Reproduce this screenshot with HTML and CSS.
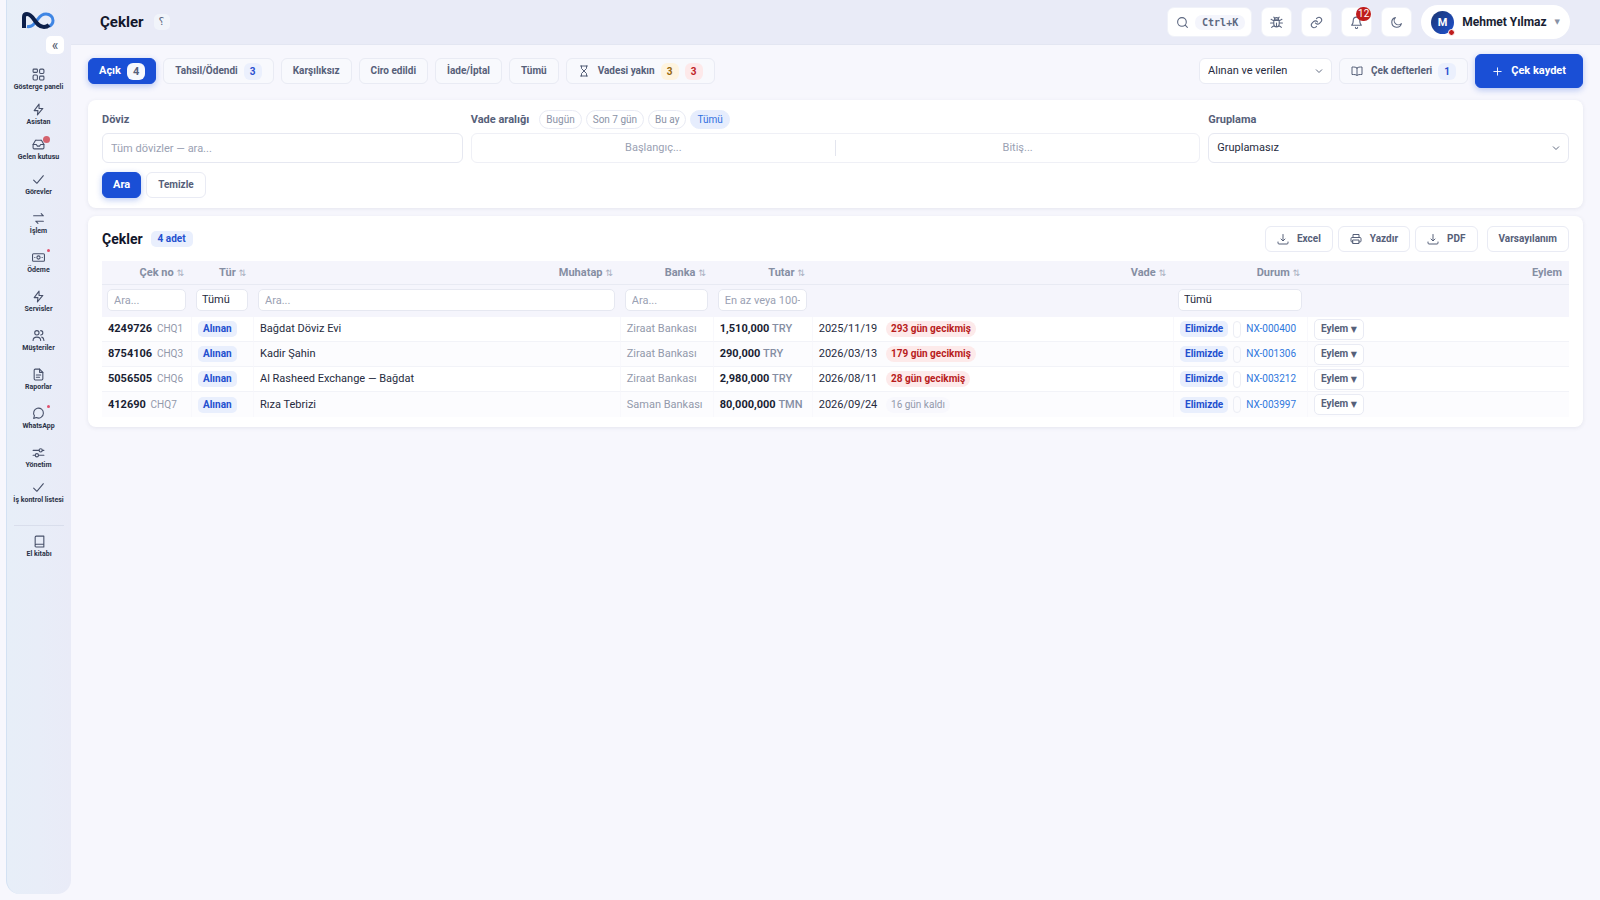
FILE: index.html
```html
<!DOCTYPE html>
<html lang="tr">
<head>
    <meta charset="UTF-8">
    <meta name="viewport" content="width=device-width, initial-scale=1.0">
    <title>Çekler</title>
    <link rel="stylesheet" href="styles.css">
</head>
<body>
    <!-- Icon sprite -->
    <svg class="sprite" aria-hidden="true">
        <symbol id="i-grid" viewBox="0 0 24 24"><rect x="2" y="2" width="8" height="6" rx="1.5"/><rect x="14" y="2" width="8" height="8" rx="2"/><rect x="2" y="13" width="8" height="9" rx="2"/><rect x="14" y="15" width="8" height="7" rx="1.5"/></symbol>
        <symbol id="i-bolt" viewBox="0 0 24 24"><path d="M13 2L4 14h7l-1 8 10-12h-7z"/></symbol>
        <symbol id="i-inbox" viewBox="0 0 24 24"><path d="M22 12h-6l-2 3h-4l-2-3H2"/><path d="M6 5L2 12v6a2 2 0 0 0 2 2h16a2 2 0 0 0 2-2v-6l-4-7a2 2 0 0 0-2-1H8a2 2 0 0 0-2 1z"/></symbol>
        <symbol id="i-check" viewBox="0 0 24 24"><path d="M3 13l6 6L21 5"/></symbol>
        <symbol id="i-swap" viewBox="0 0 24 24"><path d="M3 7h18M17 3l4 4M21 17H7M11 21l-4-4"/></symbol>
        <symbol id="i-cash" viewBox="0 0 24 24"><rect x="1" y="5" width="22" height="14" rx="2"/><circle cx="12" cy="12" r="3"/><path d="M5 12h.5M18.500 12h.5"/></symbol>
        <symbol id="i-users" viewBox="0 0 24 24"><circle cx="9" cy="7" r="4"/><path d="M2 21c0-4 3-6 7-6s7 2 7 6M16 3a4 4 0 0 1 0 8M18 15c3 1 4 3 4 6"/></symbol>
        <symbol id="i-file" viewBox="0 0 24 24"><path d="M14 2H6a2 2 0 0 0-2 2v16a2 2 0 0 0 2 2h12a2 2 0 0 0 2-2V8z"/><path d="M14 2v6h6M8 13h8M8 17h6"/></symbol>
        <symbol id="i-chat" viewBox="0 0 24 24"><path d="M21 11.500a9 9 0 0 1-13 8L3 21l1.500-5A9 9 0 1 1 21 11.500z"/></symbol>
        <symbol id="i-sliders" viewBox="0 0 24 24"><path d="M2 8h11M19 8h3M2 17h4M12 17h10"/><circle cx="16" cy="8" r="3"/><circle cx="9" cy="17" r="3"/></symbol>
        <symbol id="i-book" viewBox="0 0 24 24"><path d="M4 19V4a2 2 0 0 1 2-2h14v20H6a2 2 0 0 1-2-3 3 3 0 0 1 2-2h14"/></symbol>
        <symbol id="i-search" viewBox="0 0 24 24"><circle cx="11" cy="11" r="8"/><path d="M21 21l-4-4"/></symbol>
        <symbol id="i-bug" viewBox="0 0 24 24"><path d="M8 7a4 4 0 0 1 8 0zM7 8h10v7a5 5 0 0 1-10 0zM12 13v7M7 13H1M23 13h-6M7 9L2 6M17 9l5-3M8 17l-5 4M16 17l5 4M9 4L7 2M15 4l2-2"/></symbol>
        <symbol id="i-link" viewBox="0 0 24 24"><path d="M10 13a5 5 0 0 0 7.500.5l3-3a5 5 0 0 0-7-7L12 5"/><path d="M14 11a5 5 0 0 0-7.500-.5l-3 3a5 5 0 0 0 7 7L12 19"/></symbol>
        <symbol id="i-bell" viewBox="0 0 24 24"><path d="M18 8A6 6 0 0 0 6 8c0 7-3 9-3 9h18s-3-2-3-9M14 21a2 2 0 0 1-4 0"/></symbol>
        <symbol id="i-moon" viewBox="0 0 24 24"><path d="M21 14A9 9 0 1 1 10 3a7 7 0 0 0 11 11z"/></symbol>
        <symbol id="i-hourglass" viewBox="0 0 24 24"><path d="M5 2h14M5 22h14M7 2v5l5 5 5-5V2M7 22v-5l5-5 5 5v5"/></symbol>
        <symbol id="i-openbook" viewBox="0 0 24 24"><path d="M12 6c-2-2-5-2-10-2v15c5 0 8 0 10 2 2-2 5-2 10-2V4c-5 0-8 0-10 2zM12 6v15"/></symbol>
        <symbol id="i-plus" viewBox="0 0 24 24"><path d="M12 4v16M4 12h16"/></symbol>
        <symbol id="i-download" viewBox="0 0 24 24"><path d="M2 18v2a2 2 0 0 0 2 2h16a2 2 0 0 0 2-2v-2M8 12l4 4 4-4M12 3v12"/></symbol>
        <symbol id="i-print" viewBox="0 0 24 24"><path d="M6 9V3h12v6M6 18H4a2 2 0 0 1-2-2v-5a2 2 0 0 1 2-2h16a2 2 0 0 1 2 2v5a2 2 0 0 1-2 2h-2"/><rect x="6" y="14" width="12" height="7"/></symbol>
    </svg>

    <aside class="sidebar">
        <a href="#" class="brand" aria-label="Ana sayfa">
            <svg viewBox="0 0 33 17" width="33" height="17" fill="none">
                <path d="M5 14.500c6 1 8-4 11-7.500 2-3 4-5 8-5 4 0 7 3 7 6.500 0 3-2 5-4 6" stroke="#3f86e4" stroke-width="3"/>
                <path d="M2 16V5c0-2 1-3 3-3 7 0 8 13 17 13 2 0 4-1 5-2" stroke="#0c1f4a" stroke-width="4"/>
            </svg>
        </a>
        <button class="collapse" type="button" aria-label="Menüyü daralt">«</button>
        <nav class="menu">
            <a href="#"><svg class="icon"><use href="#i-grid"/></svg>Gösterge paneli</a>
            <a href="#"><svg class="icon"><use href="#i-bolt"/></svg>Asistan</a>
            <a href="#" class="has-badge"><svg class="icon"><use href="#i-inbox"/></svg>Gelen kutusu</a>
            <a href="#"><svg class="icon"><use href="#i-check"/></svg>Görevler</a>
            <a href="#" class="group"><svg class="icon"><use href="#i-swap"/></svg>İşlem</a>
            <a href="#" class="group has-dot"><svg class="icon"><use href="#i-cash"/></svg>Ödeme</a>
            <a href="#" class="group"><svg class="icon"><use href="#i-bolt"/></svg>Servisler</a>
            <a href="#" class="group"><svg class="icon"><use href="#i-users"/></svg>Müşteriler</a>
            <a href="#" class="group"><svg class="icon"><use href="#i-file"/></svg>Raporlar</a>
            <a href="#" class="group has-dot"><svg class="icon"><use href="#i-chat"/></svg>WhatsApp</a>
            <a href="#" class="group"><svg class="icon"><use href="#i-sliders"/></svg>Yönetim</a>
            <a href="#"><svg class="icon"><use href="#i-check"/></svg>İş kontrol listesi</a>
        </nav>
        <nav class="menu menu-foot">
            <a href="#"><svg class="icon"><use href="#i-book"/></svg>El kitabı</a>
        </nav>
    </aside>

    <div class="page">
        <header class="topbar">
            <h1>Çekler</h1>
            <button class="help" type="button">؟</button>
            <div class="top-actions">
                <button class="top-btn search-btn" type="button"><svg class="icon"><use href="#i-search"/></svg><kbd>Ctrl+K</kbd></button>
                <button class="top-btn" type="button" aria-label="Hata bildir"><svg class="icon"><use href="#i-bug"/></svg></button>
                <button class="top-btn" type="button" aria-label="Bağlantılar"><svg class="icon"><use href="#i-link"/></svg></button>
                <button class="top-btn" type="button" aria-label="Bildirimler"><svg class="icon"><use href="#i-bell"/></svg><span class="notif">12</span></button>
                <button class="top-btn" type="button" aria-label="Koyu tema"><svg class="icon"><use href="#i-moon"/></svg></button>
                <button class="user" type="button"><span class="avatar">M</span>Mehmet Yılmaz<span class="caret">▼</span></button>
            </div>
        </header>

        <main>
            <div class="tabs">
                <button class="btn primary" type="button">Açık <span class="count white">4</span></button>
                <button class="btn soft" type="button">Tahsil/Ödendi <span class="count blue">3</span></button>
                <button class="btn soft" type="button">Karşılıksız</button>
                <button class="btn soft" type="button">Ciro edildi</button>
                <button class="btn soft" type="button">İade/İptal</button>
                <button class="btn soft" type="button">Tümü</button>
                <button class="btn soft" type="button"><svg class="icon"><use href="#i-hourglass"/></svg>Vadesi yakın <span class="count amber">3</span><span class="count red">3</span></button>
                <div class="tabs-right">
                    <select class="select direction" aria-label="Yön">
                        <option>Alınan ve verilen</option>
                    </select>
                    <button class="btn soft" type="button"><svg class="icon"><use href="#i-openbook"/></svg>Çek defterleri <span class="count blue">1</span></button>
                    <button class="btn primary big" type="button"><svg class="icon"><use href="#i-plus"/></svg>Çek kaydet</button>
                </div>
            </div>

            <form class="card">
                <div class="filters">
                    <div class="field">
                        <div class="field-head"><label for="currency">Döviz</label></div>
                        <input id="currency" class="input" type="text" placeholder="Tüm dövizler — ara...">
                    </div>
                    <div class="field wide">
                        <div class="field-head">
                            <label for="dateFrom">Vade aralığı</label>
                            <div class="chips">
                                <button class="chip" type="button">Bugün</button>
                                <button class="chip" type="button">Son 7 gün</button>
                                <button class="chip" type="button">Bu ay</button>
                                <button class="chip active" type="button">Tümü</button>
                            </div>
                        </div>
                        <div class="range">
                            <input id="dateFrom" type="text" placeholder="Başlangıç...">
                            <span class="range-sep"></span>
                            <input type="text" placeholder="Bitiş..." aria-label="Vade bitişi">
                        </div>
                    </div>
                    <div class="field">
                        <div class="field-head"><label for="grouping">Gruplama</label></div>
                        <select id="grouping" class="input select">
                            <option>Gruplamasız</option>
                        </select>
                    </div>
                </div>
                <div class="form-actions">
                    <button class="btn primary" type="button">Ara</button>
                    <button class="btn" type="button">Temizle</button>
                </div>
            </form>

            <section class="card">
                <div class="card-head">
                    <h2>Çekler</h2>
                    <span class="badge total">4 adet</span>
                    <div class="tools">
                        <button class="btn" type="button"><svg class="icon"><use href="#i-download"/></svg>Excel</button>
                        <button class="btn" type="button"><svg class="icon"><use href="#i-print"/></svg>Yazdır</button>
                        <button class="btn" type="button"><svg class="icon"><use href="#i-download"/></svg>PDF</button>
                        <button class="btn view" type="button">Varsayılanım</button>
                    </div>
                </div>
                <table class="cheques">
                    <colgroup>
                        <col class="c-no"><col class="c-type"><col class="c-party"><col class="c-bank"><col class="c-amount"><col><col class="c-status"><col class="c-action">
                    </colgroup>
                    <thead>
                        <tr class="titles">
                            <th>Çek no <i>⇅</i></th>
                            <th>Tür <i>⇅</i></th>
                            <th>Muhatap <i>⇅</i></th>
                            <th>Banka <i>⇅</i></th>
                            <th>Tutar <i>⇅</i></th>
                            <th>Vade <i>⇅</i></th>
                            <th>Durum <i>⇅</i></th>
                            <th>Eylem</th>
                        </tr>
                        <tr class="search-row">
                            <td><input type="text" placeholder="Ara..." aria-label="Çek no ara"></td>
                            <td><select aria-label="Tür"><option>Tümü</option></select></td>
                            <td><input type="text" placeholder="Ara..." aria-label="Muhatap ara"></td>
                            <td><input type="text" placeholder="Ara..." aria-label="Banka ara"></td>
                            <td><input type="text" placeholder="En az veya 100-500" aria-label="Tutar ara"></td>
                            <td></td>
                            <td><select aria-label="Durum"><option>Tümü</option></select></td>
                            <td></td>
                        </tr>
                    </thead>
                    <tbody>
                        <tr>
                            <td><b>4249726</b> <span class="code">CHQ1</span></td>
                            <td><span class="badge">Alınan</span></td>
                            <td>Bağdat Döviz Evi</td>
                            <td class="muted">Ziraat Bankası</td>
                            <td><b>1,510,000</b> <span class="cur">TRY</span></td>
                            <td>2025/11/19 <span class="due late">293 gün gecikmiş</span></td>
                            <td><div class="status"><span class="badge">Elimizde</span><span class="tag"></span><a href="#">NX-000400</a></div></td>
                            <td><button class="row-btn" type="button">Eylem <span>▼</span></button></td>
                        </tr>
                        <tr>
                            <td><b>8754106</b> <span class="code">CHQ3</span></td>
                            <td><span class="badge">Alınan</span></td>
                            <td>Kadir Şahin</td>
                            <td class="muted">Ziraat Bankası</td>
                            <td><b>290,000</b> <span class="cur">TRY</span></td>
                            <td>2026/03/13 <span class="due late">179 gün gecikmiş</span></td>
                            <td><div class="status"><span class="badge">Elimizde</span><span class="tag"></span><a href="#">NX-001306</a></div></td>
                            <td><button class="row-btn" type="button">Eylem <span>▼</span></button></td>
                        </tr>
                        <tr>
                            <td><b>5056505</b> <span class="code">CHQ6</span></td>
                            <td><span class="badge">Alınan</span></td>
                            <td>Al Rasheed Exchange — Bağdat</td>
                            <td class="muted">Ziraat Bankası</td>
                            <td><b>2,980,000</b> <span class="cur">TRY</span></td>
                            <td>2026/08/11 <span class="due late">28 gün gecikmiş</span></td>
                            <td><div class="status"><span class="badge">Elimizde</span><span class="tag"></span><a href="#">NX-003212</a></div></td>
                            <td><button class="row-btn" type="button">Eylem <span>▼</span></button></td>
                        </tr>
                        <tr>
                            <td><b>412690</b> <span class="code">CHQ7</span></td>
                            <td><span class="badge">Alınan</span></td>
                            <td>Rıza Tebrizi</td>
                            <td class="muted">Saman Bankası</td>
                            <td><b>80,000,000</b> <span class="cur">TMN</span></td>
                            <td>2026/09/24 <span class="due">16 gün kaldı</span></td>
                            <td><div class="status"><span class="badge">Elimizde</span><span class="tag"></span><a href="#">NX-003997</a></div></td>
                            <td><button class="row-btn" type="button">Eylem <span>▼</span></button></td>
                        </tr>
                    </tbody>
                </table>
            </section>
        </main>
    </div>
</body>
</html>
```

FILE: styles.css
```css
* {
    box-sizing: border-box;
}
body {
    margin: 0;
    display: flex;
    min-height: 100vh;
    font-family: Roboto, "DejaVu Sans", sans-serif;
    font-size: 11px;
    line-height: 14px;
    color: #262b40;
    background-color: #f7f7fd;
}
button, input, select {
    font: inherit;
    color: inherit;
    margin: 0;
}
button {
    cursor: pointer;
}
a {
    text-decoration: none;
}
.sprite {
    display: none;
}
.icon {
    width: 12px;
    height: 12px;
    flex: none;
    fill: none;
    stroke: currentColor;
    stroke-width: 2;
    stroke-linecap: round;
    stroke-linejoin: round;
}

/* Sidebar */
.sidebar {
    width: 65px;
    flex: none;
    margin: 0 0 6px 6px;
    padding: 12px 1px 12px 0;
    display: flex;
    flex-direction: column;
    border-left: 1px solid #d3e1f3;
    border-radius: 0 0 14px 14px;
    background: linear-gradient(90deg, #e7eef8, #e8edf8 50%, #e9ebf7);
}
.brand {
    align-self: center;
    height: 17px;
}
.brand svg {
    display: block;
}
.collapse {
    align-self: flex-end;
    width: 18px;
    height: 18px;
    margin: 7px 6px 0 0;
    padding: 0;
    border: 0;
    border-radius: 5px;
    background-color: #fff;
    color: #4b556b;
    font-size: 14px;
    line-height: 16px;
}
.menu {
    padding-top: 11px;
}
.menu a {
    position: relative;
    display: flex;
    flex-direction: column;
    align-items: center;
    height: 35px;
    padding-top: 3px;
    font-size: 7px;
    font-weight: 700;
    line-height: 9px;
    white-space: nowrap;
    color: #2b3247;
}
.menu a.group {
    margin-top: 4px;
}
.menu .icon {
    width: 13px;
    height: 13px;
    margin-bottom: 2px;
    color: #475069;
}
.menu .has-dot::after,
.menu .has-badge::after {
    content: "";
    position: absolute;
    top: 1px;
    left: 40px;
    width: 3px;
    height: 3px;
    border-radius: 50%;
    background-color: #e0506c;
}
.menu .has-badge::after {
    left: 36px;
    width: 7px;
    height: 7px;
    background-color: #d4626e;
}
.menu-foot {
    margin: 12px 6px 0 7px;
    padding-top: 6px;
    border-top: 1px solid #d9deec;
}

/* Top bar */
.page {
    flex: 1;
    min-width: 0;
}
.topbar {
    display: flex;
    align-items: center;
    height: 45px;
    padding: 0 30px 0 29px;
    background-color: #e9ebf7;
    border-bottom: 1px solid #e3e6f2;
}
h1 {
    margin: 0;
    font-size: 15px;
    line-height: 20px;
    color: #12162b;
}
.help {
    width: 16px;
    height: 16px;
    margin-left: 10px;
    padding: 0;
    border: 0;
    border-radius: 5px;
    background-color: #f1f4fa;
    color: #5c6780;
    line-height: 16px;
}
.top-actions {
    display: flex;
    align-items: center;
    gap: 9px;
    margin-left: auto;
}
.top-btn {
    position: relative;
    display: flex;
    align-items: center;
    justify-content: center;
    width: 31px;
    height: 30px;
    padding: 0;
    border: 1px solid #f0f2f9;
    border-radius: 7px;
    background-color: #fff;
    color: #5c6780;
}
.top-btn .icon {
    width: 13px;
    height: 13px;
}
.search-btn {
    width: auto;
    gap: 6px;
    padding: 0 6px 0 8px;
}
kbd {
    padding: 0 7px;
    border-radius: 7px;
    background-color: #f4f5fc;
    font: 700 10px/15px "DejaVu Sans Mono", monospace;
    color: #5c6780;
}
.notif {
    position: absolute;
    top: -1px;
    right: 0;
    width: 15px;
    height: 14px;
    border-radius: 7px;
    background-color: #bf1d1d;
    color: #fff;
    font-size: 10px;
    line-height: 14px;
}
.user {
    display: flex;
    align-items: center;
    gap: 8px;
    height: 34px;
    padding: 0 10px;
    border: 0;
    border-radius: 17px;
    background-color: #fff;
    color: #191e33;
    font-size: 12px;
    font-weight: 700;
}
.avatar {
    position: relative;
    width: 23px;
    height: 23px;
    border-radius: 50%;
    background: linear-gradient(135deg, #1b3572, #1f52cf);
    color: #fff;
    font-size: 11px;
    line-height: 23px;
}
.avatar::after {
    content: "";
    position: absolute;
    right: -1px;
    bottom: -2px;
    width: 5px;
    height: 5px;
    border: 1px solid #fff;
    border-radius: 50%;
    background-color: #bf1d1d;
    box-sizing: content-box;
}
.caret {
    font-size: 7px;
    color: #8891a5;
}

/* Buttons */
main {
    display: flex;
    flex-direction: column;
    gap: 8px;
    padding: 9px 17px;
}
.btn {
    display: inline-flex;
    align-items: center;
    height: 26px;
    padding: 0 11px;
    border: 1px solid #e9ebf4;
    border-radius: 6px;
    background-color: #fff;
    color: #566079;
    font-size: 10px;
    font-weight: 700;
    white-space: nowrap;
}
.btn .icon {
    margin-right: 8px;
}
.btn.soft {
    background-color: #f8f9fd;
}
.btn.primary {
    padding: 0 10px;
    border-color: #1a4fd6;
    background-color: #1a4fd6;
    color: #fff;
    font-size: 11px;
    box-shadow: 0 2px 6px rgba(26, 79, 214, 0.3);
}
.btn.big {
    height: 34px;
    padding: 0 16px;
}
.btn.big .icon {
    width: 11px;
    height: 11px;
}
.count {
    min-width: 18px;
    height: 17px;
    margin-left: 6px;
    padding: 0 6px;
    border-radius: 6px;
    line-height: 17px;
    text-align: center;
}
.count.white { background-color: #f7f8fd; color: #566079; }
.count.blue { background-color: #ebf0fd; color: #2a4fd0; }
.count.amber { background-color: #fef4e0; color: #96660c; }
.count.red { background-color: #fde9ea; color: #bf2226; }

/* Tabs row */
.tabs {
    display: flex;
    align-items: center;
    gap: 7px;
    margin-bottom: 4px;
}
.tabs-right {
    display: flex;
    align-items: center;
    gap: 7px;
    margin-left: auto;
}
.select {
    appearance: none;
    background: #fff url("data:image/svg+xml,%3Csvg xmlns='http://www.w3.org/2000/svg' width='8' height='8' fill='none' stroke='%23626c82'%3E%3Cpath d='M1 2.500l3 3 3-3'/%3E%3C/svg%3E") no-repeat right 8px center;
}
.direction {
    width: 133px;
    height: 26px;
    padding: 0 8px;
    border: 1px solid #e9ebf4;
    border-radius: 6px;
}

/* Cards and filter form */
.card {
    padding: 10px 14px;
    border-radius: 8px;
    background-color: #fff;
    box-shadow: 0 1px 4px rgba(40, 50, 90, 0.09);
}
.filters {
    display: grid;
    grid-template-columns: repeat(4, 1fr);
    gap: 8px;
}
.field.wide {
    grid-column: span 2;
}
.field-head {
    display: flex;
    align-items: center;
    height: 19px;
    margin-bottom: 4px;
    font-weight: 700;
    color: #566079;
}
.chips {
    display: flex;
    gap: 4px;
    margin-left: 10px;
}
.chip {
    height: 19px;
    padding: 0 6px;
    border: 1px solid #e9ebf4;
    border-radius: 10px;
    background-color: #fff;
    color: #8a92a6;
    font-size: 10px;
    font-weight: 400;
    line-height: 17px;
}
.chip.active {
    border-color: #e6edfd;
    background-color: #e6edfd;
    color: #2f6fe0;
}
.input,
.range {
    display: block;
    width: 100%;
    height: 30px;
    padding: 0 8px;
    border: 1px solid #e6e8f1;
    border-radius: 6px;
}
.range {
    display: flex;
    align-items: center;
    padding: 0;
    border-color: #eff0f6;
}
.range input {
    flex: 1;
    min-width: 0;
    border: 0;
    background: none;
    text-align: center;
}
.range-sep {
    width: 1px;
    height: 16px;
    background-color: #e3e5ee;
}
::placeholder {
    color: #9aa1b3;
    opacity: 1;
}
.form-actions {
    display: flex;
    gap: 5px;
    margin-top: 9px;
}

/* Cheque list */
.card-head {
    display: flex;
    align-items: center;
    margin-bottom: 9px;
}
h2 {
    margin: 0 8px 0 0;
    font-size: 14px;
    line-height: 18px;
    color: #12162b;
}
.tools {
    display: flex;
    gap: 5px;
    margin-left: auto;
}
.tools .view {
    margin-left: 4px;
}
.badge {
    display: inline-block;
    padding: 0 5px;
    border-radius: 5px;
    background-color: #e9effd;
    color: #2350cf;
    font-size: 10px;
    font-weight: 700;
    line-height: 16px;
}
.badge.total {
    padding: 0 7px;
}
.cheques {
    width: 100%;
    table-layout: fixed;
    border-collapse: separate;
    border-spacing: 0;
}
.c-no { width: 89px; }
.c-type { width: 62px; }
.c-party { width: 25%; }
.c-bank { width: 93px; }
.c-amount { width: 99px; }
.c-status { width: 134px; }
.c-action { width: 262px; }
.cheques th {
    height: 24px;
    padding: 0 7px;
    border-bottom: 1px solid #e8eaf3;
    background-color: #f5f5fc;
    color: #858ea3;
    text-align: right;
    white-space: nowrap;
}
.cheques th i {
    font-size: 9px;
    font-style: normal;
    font-weight: 400;
    color: #a7aec0;
}
.search-row td {
    height: 32px;
    padding: 4px 5px;
    background-color: #f5f5fc;
    vertical-align: top;
}
.search-row input,
.search-row select {
    display: block;
    width: 100%;
    height: 22px;
    padding: 0 6px;
    border: 1px solid #e6e8f1;
    border-radius: 5px;
    background-color: #fff;
}
.search-row select {
    appearance: none;
    padding: 0 5px;
}
tbody td {
    height: 25px;
    padding: 0 6px;
    border-bottom: 1px solid #f2f3f8;
    white-space: nowrap;
}
tbody td + td {
    border-left: 1px solid #f8f8fc;
}
tbody tr:nth-child(even) td {
    background-color: #fcfcfe;
}
tbody tr:last-child td {
    border-bottom: 0;
}
tbody b {
    color: #191e33;
}
.code {
    margin-left: 2px;
    font-size: 10px;
    color: #9299ab;
}
.muted {
    color: #9299ab;
}
.cur {
    font-weight: 500;
    color: #858ea3;
}
.due {
    display: inline-block;
    margin-left: 6px;
    padding: 0 5px;
    border-radius: 8px;
    background-color: #f8f8fd;
    color: #9299ab;
    font-size: 10px;
    line-height: 16px;
}
.due.late {
    background-color: #fdeaea;
    color: #b81c1c;
    font-weight: 700;
}
.status {
    display: flex;
    align-items: center;
    gap: 5px;
}
.status a {
    font-size: 10px;
    color: #2f78dd;
}
.tag {
    width: 8px;
    height: 17px;
    border: 1px solid #eceef5;
    border-radius: 4px;
}
.row-btn {
    display: block;
    height: 21px;
    padding: 0 6px;
    border: 1px solid #e9ebf4;
    border-radius: 5px;
    background-color: #fff;
    color: #566079;
    font-size: 10px;
    font-weight: 700;
}
.row-btn span {
    font-size: 8px;
}
```
